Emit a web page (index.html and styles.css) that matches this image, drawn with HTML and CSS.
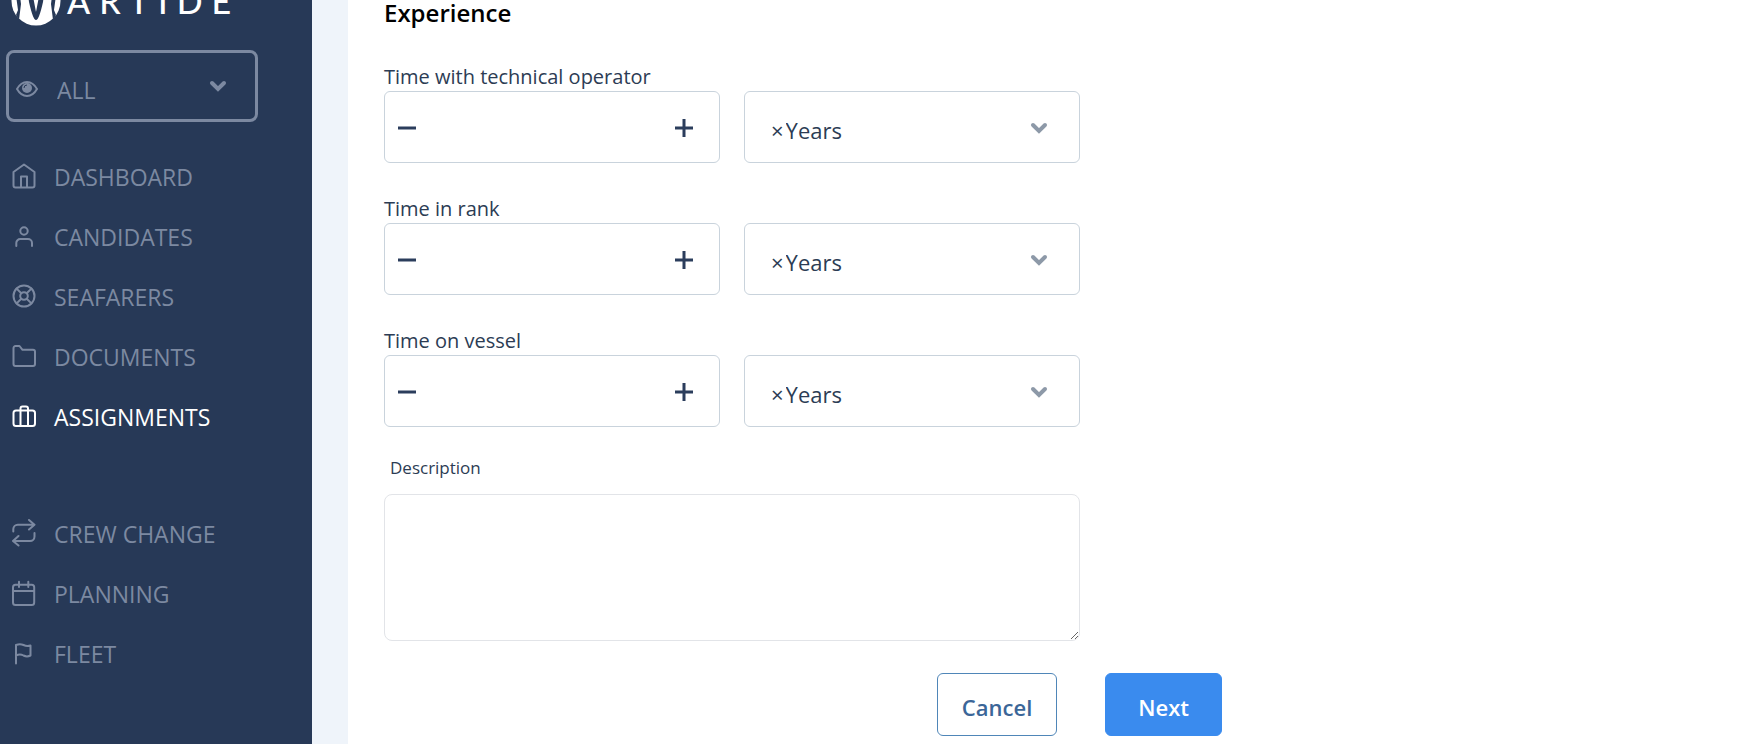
FILE: index.html
```html
<!DOCTYPE html>
<html lang="en">
<head>
    <meta charset="UTF-8">
    <meta name="viewport" content="width=device-width, initial-scale=1.0">
    <title>Martide - Assignments</title>
    <link rel="stylesheet" href="styles.css">
</head>
<body>
    <aside class="sidebar">
        <a href="#" class="logo">
            <svg class="logo-mark" viewBox="0 0 50 50" aria-hidden="true">
                <circle cx="25" cy="25" r="24.500" fill="#fff"/>
                <path d="M4 12 L8 12 L10 28 L8 44 L5 39 L7 34 Z M46 12 L42 12 L40 28 L42 44 L45 39 L43 34 Z" fill="#273957"/>
                <path d="M16 10 L18 26 Q22 44 25 44 Q28 44 32 26 L34 10 L30 10 L25 36 L20 10 Z" fill="#273957"/>
            </svg>
            <span class="logo-text">ARTIDE</span>
        </a>

        <div class="view-filter">
            <svg class="eye" viewBox="0 0 22 16" aria-hidden="true">
                <path d="M1 8 Q5 1 11 1 T21 8 Q17 15 11 15 T1 8 Z" fill="none" stroke="currentColor" stroke-width="2"/>
                <circle cx="11" cy="7" r="5" fill="currentColor"/>
                <path d="M8 7 Q8 4 11 4" fill="none" stroke="#273957"/>
            </svg>
            <select aria-label="View">
                <option>ALL</option>
            </select>
            <svg class="chevron" viewBox="0 0 18 12" aria-hidden="true"><path d="M3 3 L9 9 L15 3"/></svg>
        </div>

        <nav>
            <ul class="menu">
                <li><a href="#">
                    <svg viewBox="0 0 28 28"><path d="M3.500 10 L14 2.500 L24.500 10 V23.500 a2 2 0 0 1 -2 2 H5.500 a2 2 0 0 1 -2 -2 Z M11 25.500 V14.500 H17 V25.500"/></svg>
                    DASHBOARD</a></li>
                <li><a href="#">
                    <svg viewBox="0 0 28 28"><circle cx="14" cy="9" r="3.700"/><path d="M6.300 24 V21 a4 4 0 0 1 4 -4 H18 a4 4 0 0 1 4 4 V24"/></svg>
                    CANDIDATES</a></li>
                <li><a href="#">
                    <svg viewBox="0 0 28 28"><circle cx="14" cy="14" r="10.500"/><circle cx="14" cy="14" r="3.800"/><path d="M6.600 6.600 L11.300 11.300 M16.700 16.700 L21.400 21.400 M21.400 6.600 L16.700 11.300 M6.600 21.400 L11.300 16.700"/></svg>
                    SEAFARERS</a></li>
                <li><a href="#">
                    <svg viewBox="0 0 28 28"><path d="M3.500 6 a2 2 0 0 1 2 -2 H9.500 L12.500 7.800 H23 a2 2 0 0 1 2 2 V22 a2 2 0 0 1 -2 2 H5.500 a2 2 0 0 1 -2 -2 Z"/></svg>
                    DOCUMENTS</a></li>
                <li><a href="#" class="active">
                    <svg viewBox="0 0 28 28"><rect x="3.500" y="8.500" width="21.500" height="15.500" rx="2.500"/><path d="M10.500 24 V6.500 a2 2 0 0 1 2 -2 H16 a2 2 0 0 1 2 2 V24"/></svg>
                    ASSIGNMENTS</a></li>
            </ul>
            <ul class="menu">
                <li><a href="#">
                    <svg viewBox="0 0 28 28"><path d="M19 1 L24.500 5.700 L19 10.500 M3.300 12.500 V10 a4.500 4.500 0 0 1 4.500 -4.300 H24 M8.500 17 L3 22 L8.500 26.500 M24.500 14 V17.500 a4.500 4.500 0 0 1 -4.500 4.500 H3.500"/></svg>
                    CREW CHANGE</a></li>
                <li><a href="#">
                    <svg viewBox="0 0 28 28"><rect x="3" y="5.800" width="21.200" height="20.200" rx="2.500"/><path d="M9 2.800 V8 M18.300 2.800 V8 M3 12 H24"/></svg>
                    PLANNING</a></li>
                <li><a href="#">
                    <svg viewBox="0 0 28 28"><path d="M6 24.500 V6 Q10 4.500 13.500 6 Q17 7.800 20.500 6.500 V16.500 Q17 18.300 13.500 16.500 Q10 14.500 6 16.500"/></svg>
                    FLEET</a></li>
            </ul>
        </nav>
    </aside>

    <main class="content">
        <form class="experience">
            <h2>Experience</h2>

            <div class="field">
                <label for="operatorTime">Time with technical operator</label>
                <div class="field-row">
                    <div class="stepper">
                        <button type="button" aria-label="Decrease"><svg viewBox="0 0 18 18"><path d="M0 9 H18"/></svg></button>
                        <input type="text" id="operatorTime" inputmode="numeric">
                        <button type="button" aria-label="Increase"><svg viewBox="0 0 18 18"><path d="M0 9 H18 M9 0 V18"/></svg></button>
                    </div>
                    <div class="unit">
                        <button type="button" aria-label="Clear">×</button>
                        <select aria-label="Unit"><option>Years</option><option>Months</option></select>
                        <svg class="chevron" viewBox="0 0 18 12" aria-hidden="true"><path d="M3 3 L9 9 L15 3"/></svg>
                    </div>
                </div>
            </div>

            <div class="field">
                <label for="rankTime">Time in rank</label>
                <div class="field-row">
                    <div class="stepper">
                        <button type="button" aria-label="Decrease"><svg viewBox="0 0 18 18"><path d="M0 9 H18"/></svg></button>
                        <input type="text" id="rankTime" inputmode="numeric">
                        <button type="button" aria-label="Increase"><svg viewBox="0 0 18 18"><path d="M0 9 H18 M9 0 V18"/></svg></button>
                    </div>
                    <div class="unit">
                        <button type="button" aria-label="Clear">×</button>
                        <select aria-label="Unit"><option>Years</option><option>Months</option></select>
                        <svg class="chevron" viewBox="0 0 18 12" aria-hidden="true"><path d="M3 3 L9 9 L15 3"/></svg>
                    </div>
                </div>
            </div>

            <div class="field">
                <label for="vesselTime">Time on vessel</label>
                <div class="field-row">
                    <div class="stepper">
                        <button type="button" aria-label="Decrease"><svg viewBox="0 0 18 18"><path d="M0 9 H18"/></svg></button>
                        <input type="text" id="vesselTime" inputmode="numeric">
                        <button type="button" aria-label="Increase"><svg viewBox="0 0 18 18"><path d="M0 9 H18 M9 0 V18"/></svg></button>
                    </div>
                    <div class="unit">
                        <button type="button" aria-label="Clear">×</button>
                        <select aria-label="Unit"><option>Years</option><option>Months</option></select>
                        <svg class="chevron" viewBox="0 0 18 12" aria-hidden="true"><path d="M3 3 L9 9 L15 3"/></svg>
                    </div>
                </div>
            </div>

            <div class="description">
                <label for="description">Description</label>
                <textarea id="description" rows="4"></textarea>
            </div>

            <div class="actions">
                <button type="button" class="btn">Cancel</button>
                <button type="submit" class="btn btn-primary">Next</button>
            </div>
        </form>
    </main>
</body>
</html>
```

FILE: styles.css
```css
* {
    box-sizing: border-box;
}

body {
    margin: 0;
    min-height: 100vh;
    display: flex;
    background-color: #eff4fa;
    color: #2c3c54;
    font-family: "Open Sans", "Noto Sans", sans-serif;
    font-size: 20px;
}

button, input, select, textarea {
    font: inherit;
    color: inherit;
}

/* Sidebar */
.sidebar {
    flex: none;
    width: 312px;
    overflow: hidden;
    background-color: #273957;
    color: #7c89a1;
}

.logo {
    display: flex;
    align-items: center;
    gap: 6px;
    margin-top: -24px;
    padding-left: 11px;
    color: #fff;
    text-decoration: none;
}

.logo-mark {
    width: 50px;
    height: 50px;
}

.logo-text {
    font-family: Lato, sans-serif;
    font-size: 34px;
    font-weight: 500;
    line-height: 40px;
    letter-spacing: 9px;
}

.view-filter {
    position: relative;
    width: 252px;
    height: 72px;
    margin: 24px 0 25px 6px;
    border: 3px solid #7c89a1;
    border-radius: 8px;
}

.view-filter select {
    width: 100%;
    height: 100%;
    padding: 8px 48px 0 48px;
    border: 0;
    background: none;
    appearance: none;
    font-size: 23px;
}

.eye {
    position: absolute;
    left: 7px;
    top: 28px;
    width: 22px;
    height: 16px;
}

.chevron {
    position: absolute;
    right: 31px;
    top: 30px;
    width: 18px;
    height: 12px;
    fill: none;
    stroke: currentColor;
    stroke-width: 4;
    stroke-linecap: round;
    pointer-events: none;
}

.view-filter .chevron {
    right: 28px;
    top: 27px;
}

.menu {
    margin: 0 0 57px;
    padding: 0;
    list-style: none;
}

.menu a {
    display: flex;
    align-items: center;
    gap: 16px;
    height: 60px;
    padding-left: 10px;
    color: inherit;
    font-size: 23px;
    text-decoration: none;
}

.menu svg {
    width: 28px;
    height: 28px;
    margin-bottom: 3px;
    fill: none;
    stroke: currentColor;
    stroke-width: 2;
    stroke-linecap: round;
    stroke-linejoin: round;
}

.menu .active {
    color: #fff;
}

/* Form */
.content {
    flex: 1;
    margin-left: 36px;
    padding: 0 36px;
    background-color: #fff;
}

.experience {
    max-width: 838px;
}

.experience h2 {
    margin: 0 0 36px;
    color: #000;
    font-size: 24px;
    font-weight: 600;
    line-height: 26px;
}

.field {
    max-width: 696px;
    margin-bottom: 31px;
}

.field label {
    display: block;
    line-height: 29px;
}

.field-row {
    display: grid;
    grid-template-columns: repeat(2, minmax(0, 1fr));
    gap: 24px;
}

.stepper, .unit {
    display: flex;
    align-items: center;
    height: 72px;
    border: 1px solid #c9d3dc;
    border-radius: 6px;
}

.stepper {
    padding: 2px 16px 0 5px;
}

.stepper button {
    flex: none;
    width: 36px;
    height: 36px;
    padding: 0 8px;
    border: 0;
    background: none;
}

.stepper svg {
    display: block;
    width: 18px;
    height: 18px;
    stroke: #2b3d5c;
    stroke-width: 3;
}

.stepper input {
    flex: 1;
    min-width: 0;
    border: 0;
    background: none;
    text-align: center;
}

.unit {
    position: relative;
    padding: 6px 0 0 26px;
}

.unit button {
    padding: 0 2px 0 0;
    border: 0;
    background: none;
    font-size: 22px;
}

.unit select {
    flex: 1;
    padding: 0;
    border: 0;
    background: none;
    appearance: none;
    font-size: 22px;
}

.unit .chevron {
    color: #8d99a8;
}

.description {
    max-width: 696px;
}

.description label {
    display: block;
    margin-top: -2px;
    padding-left: 6px;
    font-size: 17px;
    line-height: 24px;
}

.description textarea {
    display: block;
    width: 100%;
    height: 147px;
    margin-top: 14px;
    padding: 12px;
    border: 1px solid #e2e4e8;
    border-radius: 8px;
    background: none;
}

.actions {
    display: flex;
    justify-content: flex-end;
    gap: 48px;
    margin-top: 32px;
}

.btn {
    height: 63px;
    padding: 4px 24px 0;
    border: 1px solid #4f86b8;
    border-radius: 6px;
    background-color: #fff;
    color: #3b6698;
    font-size: 22px;
    font-weight: 600;
}

.btn-primary {
    padding: 4px 32px 0;
    border-color: #3a8bee;
    background-color: #3a8bee;
    color: #fff;
}
```
